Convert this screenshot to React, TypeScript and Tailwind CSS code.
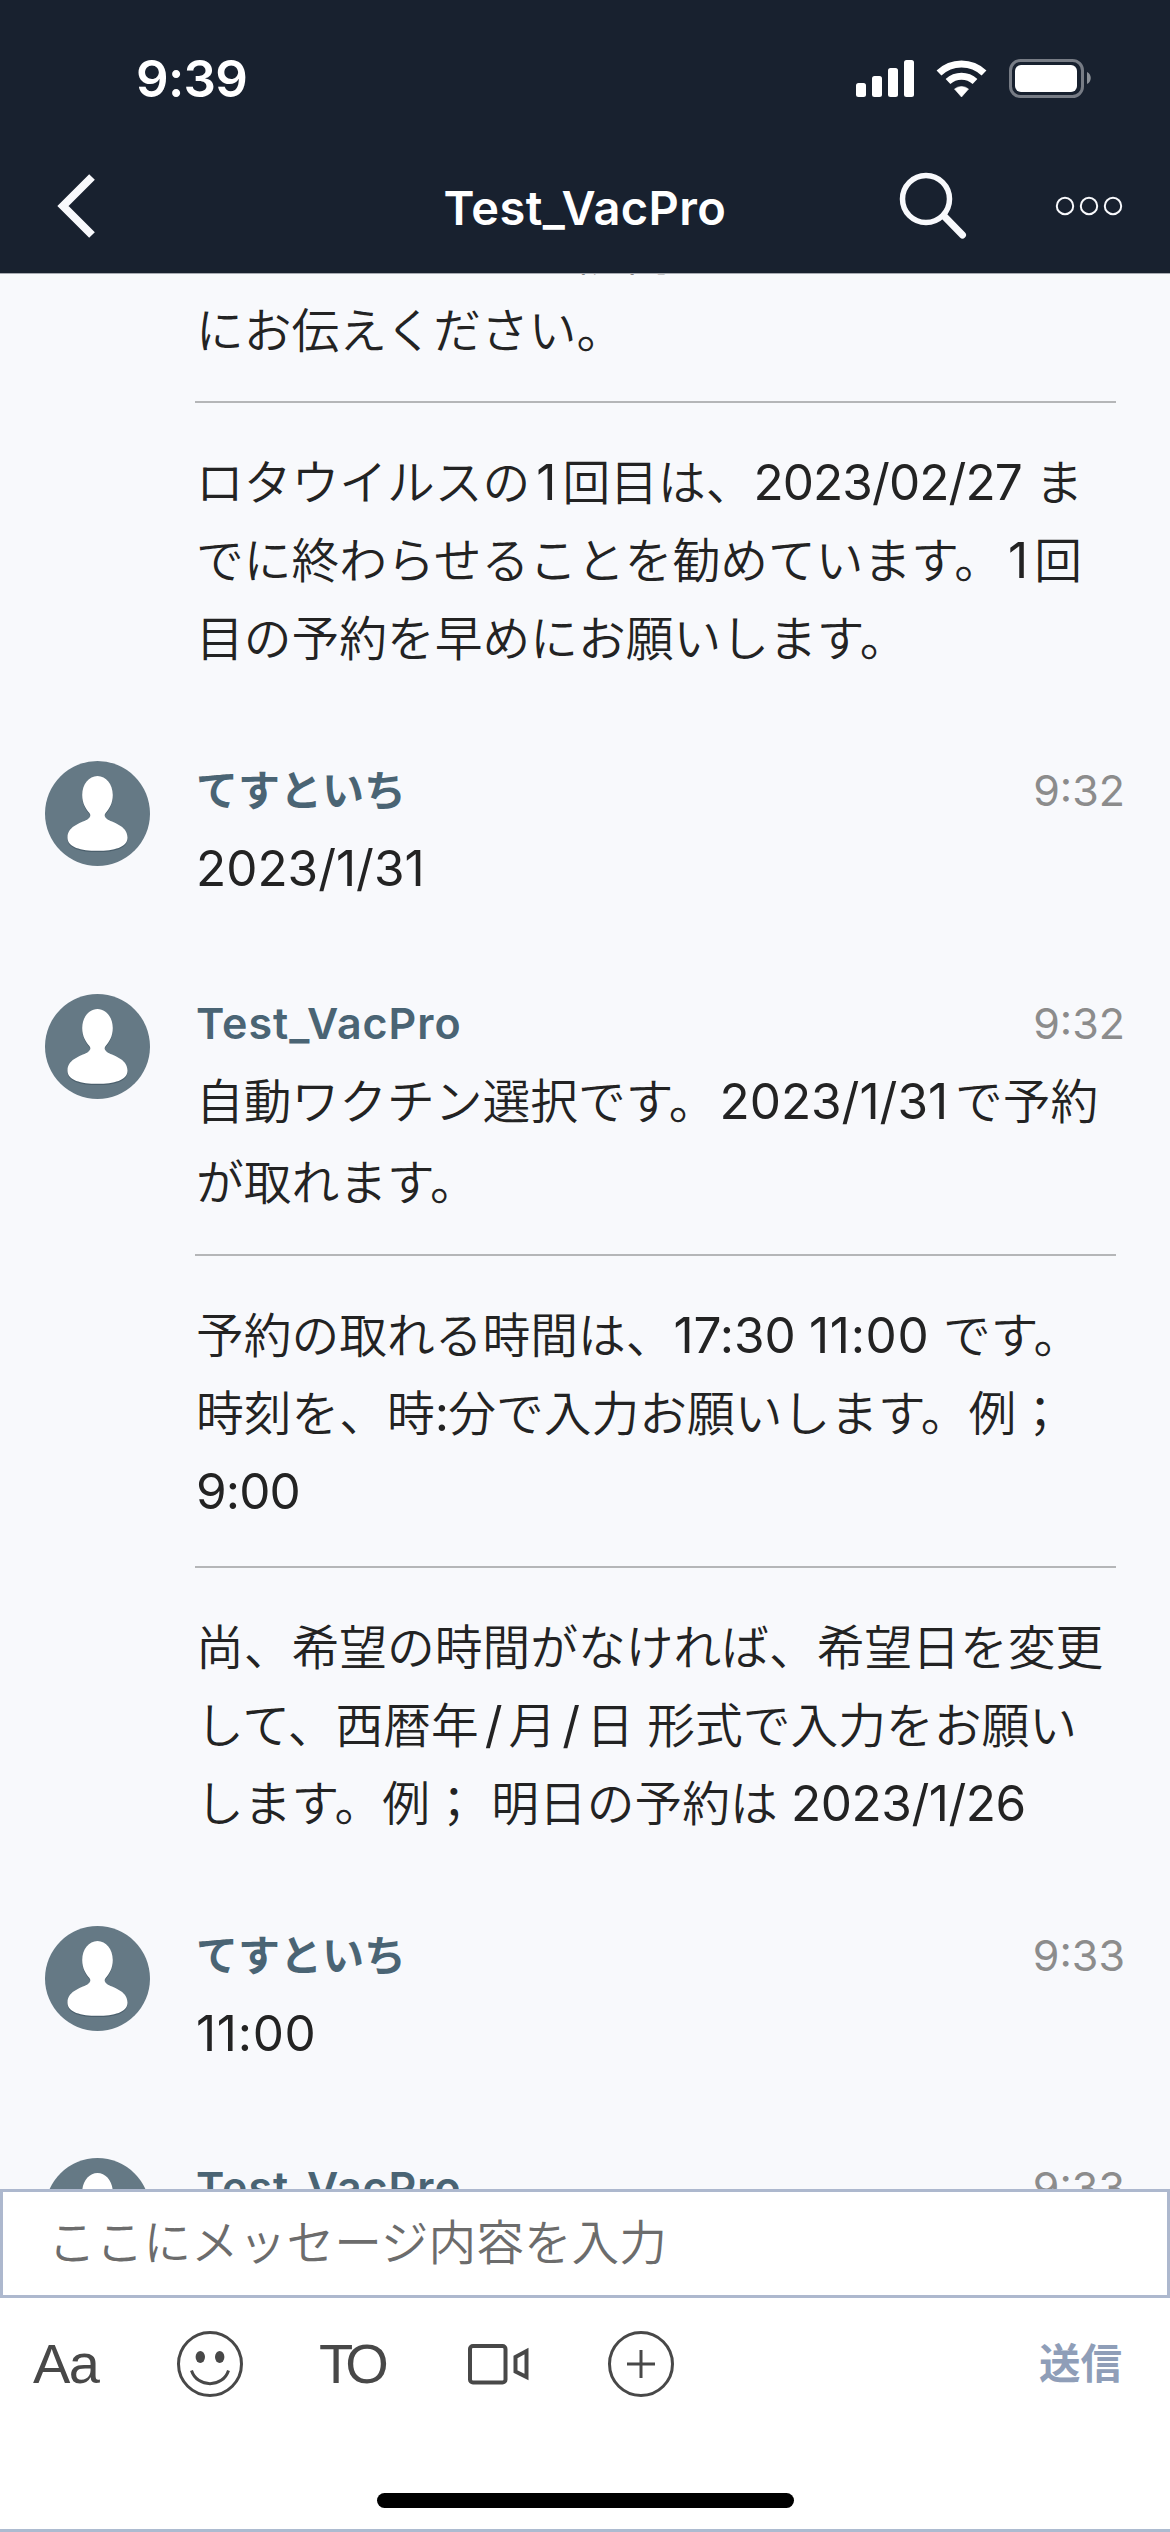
import { ReactNode } from 'react';
import clsx from 'clsx';

interface Block {
  lines: string[];
  className?: string;
}

interface Message {
  name?: string;
  time?: string;
  blocks: Block[];
}

const messages: Message[] = [
  {
    blocks: [
      { lines: ['ほかにもきになる院内のことはすぐ', 'にお伝えください。'] },
      {
        className: 'mt-[31px] pt-[41px]',
        lines: [
          'ロタウイルスの1回目は、2023/02/27 ま',
          'でに終わらせることを勧めています。1回',
          '目の予約を早めにお願いします。',
        ],
      },
    ],
  },
  {
    name: 'てすといち',
    time: '9:32',
    blocks: [{ lines: ['2023/1/31'] }],
  },
  {
    name: 'Test_VacPro',
    time: '9:32',
    blocks: [
      { lines: ['自動ワクチン選択です。2023/1/31で予約', 'が取れます。'] },
      {
        className: 'mt-[29px] pt-[41px]',
        lines: ['予約の取れる時間は、17:30 11:00 です。', '時刻を、時:分で入力お願いします。例；', '9:00'],
      },
      {
        className: 'mt-[35px] pt-[41px]',
        lines: [
          '尚、希望の時間がなければ、希望日を変更',
          'して、西暦年/月/日 形式で入力をお願い',
          'します。例； 明日の予約は 2023/1/26',
        ],
      },
    ],
  },
  {
    name: 'てすといち',
    time: '9:33',
    blocks: [{ lines: ['11:00'] }],
  },
  {
    name: 'Test_VacPro',
    time: '9:33',
    blocks: [{ lines: ['12:00'] }],
  },
];

// narrow digits get some of their space back, the rest is set tight
function latinSpacing(text: string) {
  const ones = text.split('1').length - 1;
  return `${(-0.9 + (4 * ones) / text.length).toFixed(2)}px`;
}

// Latin runs are set a little larger than the kana and kanji around them
function MixedText({ text }: { text: string }) {
  const parts = text.split(/([\x21-\x7e]+)/);
  return (
    <>
      {parts.map((part, i) => {
        if (i % 2 === 0) return part;
        const single = part === '1' || part === '/';
        const glued = part.length > 1 && parts[i + 1] !== '' && !parts[i + 1].startsWith(' ');
        return (
          <span
            key={i}
            className={clsx('text-[49.5px] font-normal leading-none', single && 'mx-[6px]', glued && 'ml-[3px] mr-[7px]')}
            style={{ letterSpacing: single ? '0px' : latinSpacing(part) }}
          >
            {part}
          </span>
        );
      })}
    </>
  );
}

const PERSON_PATH =
  'M52.5 15C61 15 67.8 23.5 67.8 34C67.8 42.5 64 48 60.6 52C59 54 59.4 56 62 58C66.5 61.5 82.5 64 82.5 76.5C82.5 86.5 69 89.8 52.5 89.8C36 89.8 22.5 86.5 22.5 76.5C22.5 64 38.5 61.5 43 58C45.6 56 46 54 44.4 52C41 48 37.2 42.5 37.2 34C37.2 23.5 44 15 52.5 15Z';

function Avatar() {
  return (
    <svg viewBox="0 0 105 105" className="h-[105px] w-[105px] shrink-0">
      <circle cx="52.5" cy="52.5" r="52.5" fill="#657985" />
      <path transform="translate(0 1.2)" fill="#4b5f6c" d={PERSON_PATH} />
      <path fill="#fff" d={PERSON_PATH} />
    </svg>
  );
}

function MessageItem({ message }: { message: Message }) {
  return (
    <div className="flex shrink-0 pl-[45px]">
      <div className="w-[150px] shrink-0">{message.name && <Avatar />}</div>
      <div className="w-[930px] shrink-0">
        {message.name && (
          <div className="mb-[10px] flex h-[58px] items-center justify-between pt-px pl-px">
            <span
              className={clsx(
                'text-[#4a6474]',
                message.name === 'てすといち' ? 'text-[42px] font-bold' : 'text-[43px] font-semibold tracking-[1px]'
              )}
            >
              {message.name}
            </span>
            <span className="text-[43px] text-[#8c8c8c]">{message.time}</span>
          </div>
        )}
        {message.blocks.map((block, i) => (
          <div
            key={i}
            className={clsx(
              'w-[921px] whitespace-nowrap pl-px text-[47.75px] font-[350] text-[#232323]',
              i > 0 && 'border-t-2 border-[#b5b6b8]',
              message.name && i === 0 ? 'leading-[81.5px]' : 'leading-[78px]',
              block.className
            )}
          >
            {block.lines.map((line, j) => (
              <p key={j}>
                <MixedText text={line} />
              </p>
            ))}
          </div>
        ))}
      </div>
    </div>
  );
}

function StatusBar() {
  return (
    <div className="flex h-[156px] items-center justify-between pl-[136px] pr-[78px]">
      <span className="text-[51px] font-semibold leading-none tracking-[-0.7px]">9:39</span>
      <svg viewBox="0 0 236 40" className="h-[40px] w-[236px]" fill="#fff">
        <rect x="0" y="25" width="10" height="14" rx="2.5" />
        <rect x="16" y="18" width="10" height="21" rx="2.5" />
        <rect x="32" y="10" width="10" height="29" rx="2.5" />
        <rect x="48" y="2" width="10" height="37" rx="2.5" />
        <path d="M105.5 39l-7-8a11 11 0 0 1 14 0z" strokeLinejoin="round" stroke="#fff" strokeWidth="0.6" />
        <path d="M92 23.5a20 20 0 0 1 27 0" fill="none" stroke="#fff" strokeWidth="7" />
        <path d="M83 15a32.5 32.5 0 0 1 45 0" fill="none" stroke="#fff" strokeWidth="7" />
        <rect x="154.5" y="2.5" width="72" height="36" rx="10" fill="none" stroke="#777c85" strokeWidth="3" />
        <rect x="159" y="7" width="62" height="27" rx="6" />
        <path d="M231 14c5 2 5 10 0 12z" fill="#8b9097" />
      </svg>
    </div>
  );
}

function NavBar() {
  return (
    <div className="flex h-[117px] items-center justify-between">
      <svg viewBox="0 0 370 117" className="h-[117px] w-[370px]" fill="none">
        <path d="M92 21L63 50l29 29" stroke="#f8f9fc" strokeWidth="8" />
      </svg>
      <h1 className="pb-[14px] text-[47px] font-semibold leading-none tracking-[0.4px]">Test_VacPro</h1>
      <svg viewBox="0 0 370 117" className="h-[117px] w-[370px]" fill="none" stroke="#f8f9fc">
        <circle cx="126" cy="43" r="23.5" strokeWidth="5.5" />
        <path d="M144 60l18.5 19" strokeWidth="7" strokeLinecap="round" />
        <circle cx="265" cy="50" r="8.2" strokeWidth="2" />
        <circle cx="289" cy="50" r="8.2" strokeWidth="2" />
        <circle cx="313" cy="50" r="8.2" strokeWidth="2" />
      </svg>
    </div>
  );
}

function ToolIcon({ children }: { children: ReactNode }) {
  return (
    <svg viewBox="0 0 70 70" className="h-[70px] w-[70px]" fill="none" stroke="#484848" strokeWidth="3">
      {children}
    </svg>
  );
}

function Composer() {
  return (
    <footer className="flex h-[343px] shrink-0 flex-col border-b-[3px] border-[#adbbd0] bg-white">
      <div className="flex h-[109px] items-center border-[3px] border-[#adb8ce] pl-[45px] text-[47.7px] leading-none font-[350] text-[#6c6c6c]">
        ここにメッセージ内容を入力
      </div>
      <div className="flex h-[132px] items-center justify-between pl-[33px] pr-[48px]">
        <div className="flex items-center font-['Liberation_Sans',sans-serif] text-[56px] leading-none text-[#484848]">
          <span className="w-[142px] tracking-[-1.5px]">Aa</span>
          <ToolIcon>
            <circle cx="35" cy="35" r="31.5" />
            <ellipse cx="25.3" cy="28" rx="4.7" ry="6" fill="#484848" stroke="none" />
            <ellipse cx="44.7" cy="28" rx="4.7" ry="6" fill="#484848" stroke="none" />
            <path d="M16.5 41.5C22 59 48 59 53.5 41.5" />
          </ToolIcon>
          <span className="ml-[74px] w-[147px] tracking-[-7px]">TO</span>
          <ToolIcon>
            <rect x="4" y="17" width="35.5" height="36.5" rx="3" strokeWidth="4" />
            <path d="M49.5 28L60.5 22V48L49.5 42.5z" strokeWidth="4" />
          </ToolIcon>
          <div className="ml-[70px]">
            <ToolIcon>
              <circle cx="35" cy="35" r="31.5" />
              <path d="M21 35H49M35 21V49" />
            </ToolIcon>
          </div>
        </div>
        <span className="text-[41.5px] font-bold text-[#8f9eb8]">送信</span>
      </div>
      <div className="mx-auto mt-[63px] h-[15px] w-[417px] rounded-full bg-black" />
    </footer>
  );
}

export default function App() {
  return (
    <div
      lang="ja"
      className="flex h-[2532px] w-[1170px] flex-col overflow-hidden bg-[#f8f9fc] font-['Inter','Noto_Sans_CJK_JP',sans-serif]"
    >
      <header className="h-[273px] shrink-0 bg-[#18212f] text-white">
        <StatusBar />
        <NavBar />
      </header>
      <main className="h-[1916px] shrink-0 overflow-hidden border-t border-[#a8abb2]">
        <div className="-mt-[60px] flex flex-col gap-[83px]">
          {messages.map((message, i) => (
            <MessageItem key={i} message={message} />
          ))}
        </div>
      </main>
      <Composer />
    </div>
  );
}
